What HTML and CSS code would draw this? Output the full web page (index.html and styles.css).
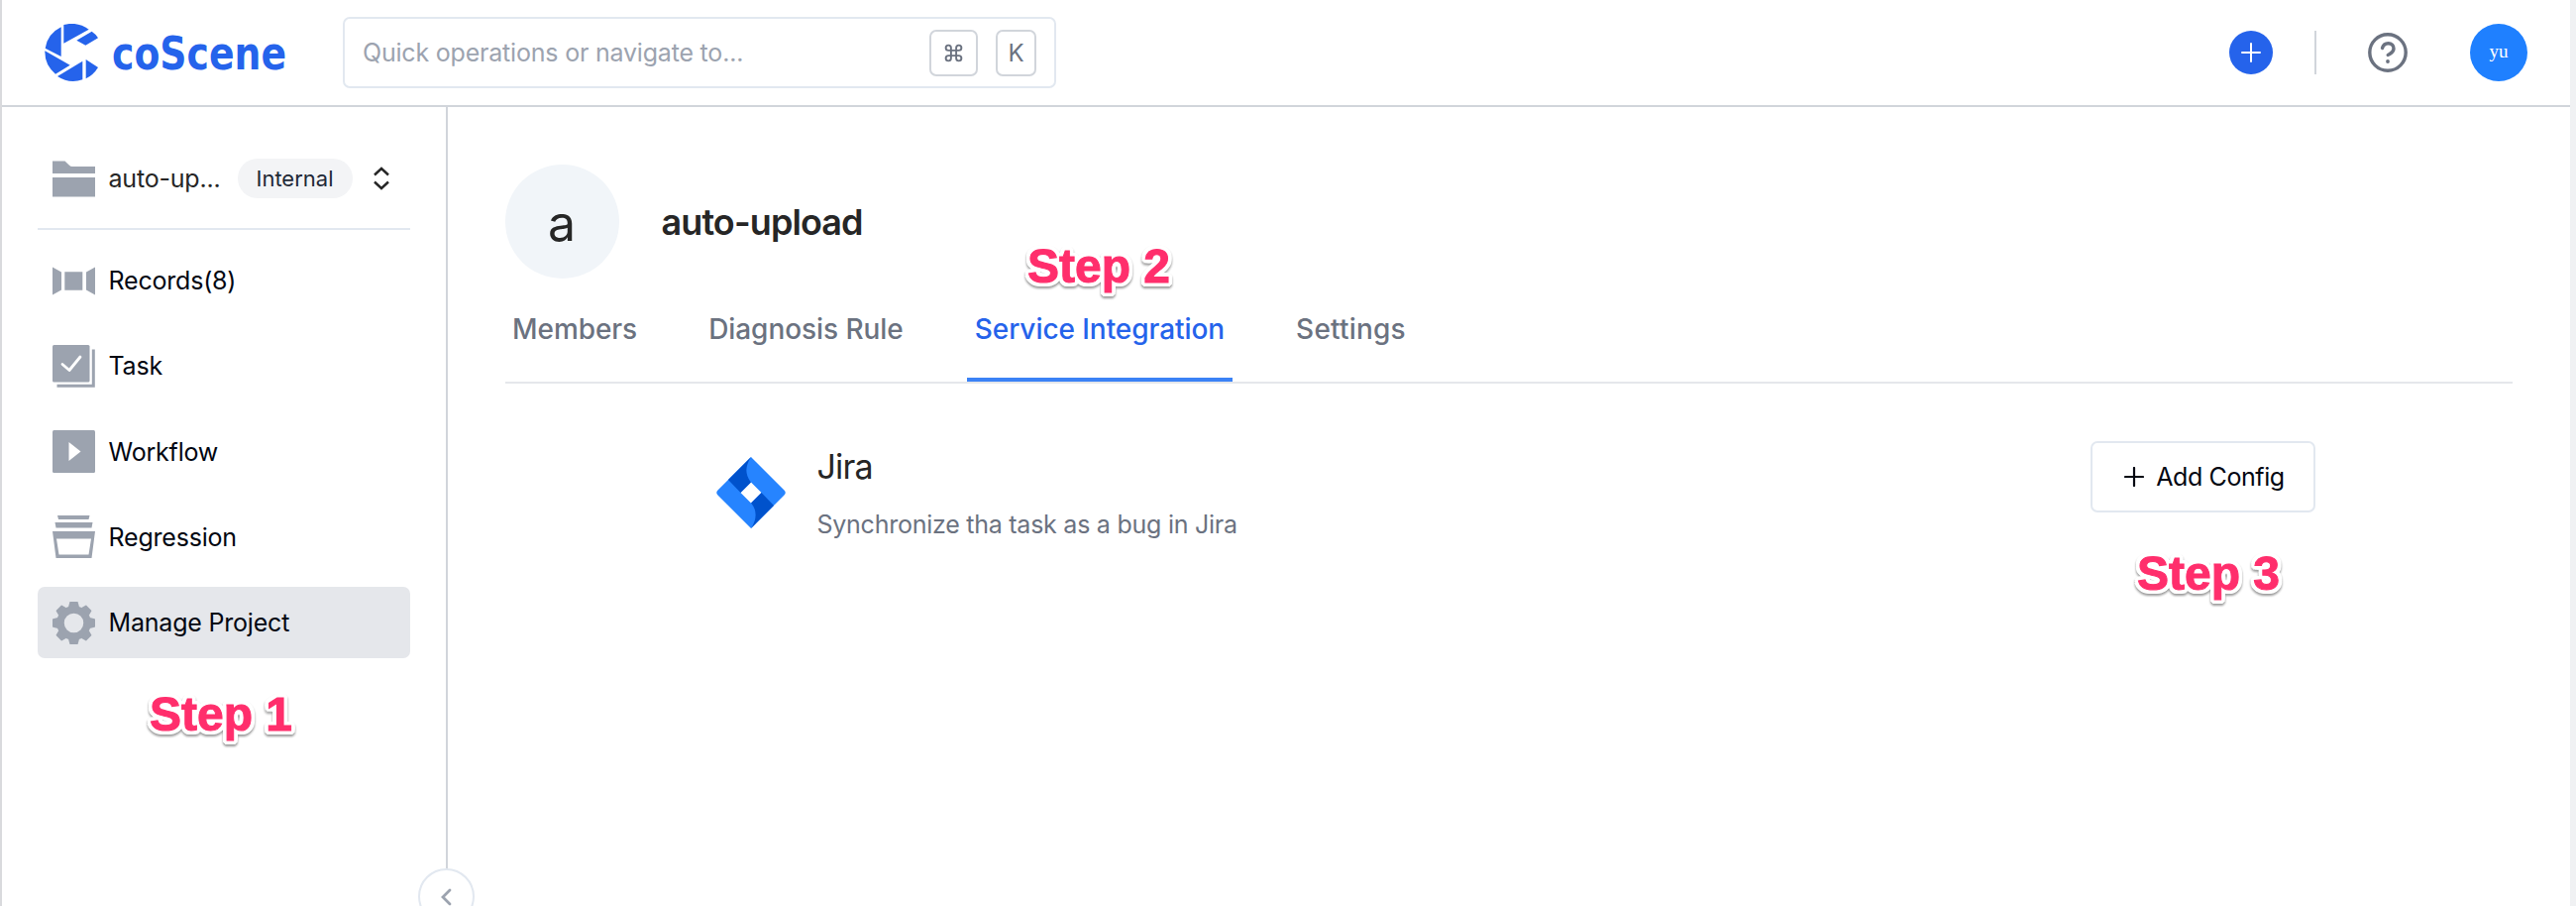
FILE: index.html
```html
<!DOCTYPE html>
<html lang="en">
<head>
<meta charset="utf-8">
<title>coScene</title>
<link rel="stylesheet" href="styles.css">
</head>
<body>
<div class="app">
  <header class="header">
    <div class="brand">
      <svg class="brand-mark" viewBox="135 72 165 174"><g fill="#2563eb"><path d="M185 82A87 87 0 0 0 137 146L185 171Z"/><path d="M193 75A90 90 0 0 1 269 89L193 131Z"/><path d="M278 95Q290 103 297 115L259 137L232 122Z"/><path d="M136 154A87 87 0 0 0 168 224L212 197Z"/><path d="M174 231A88 88 0 0 0 250 241L250 185Z"/><path d="M260 180L297 204Q283 227 260 238Z"/></g></svg>
      <svg class="brand-name" viewBox="0 0 220 58"><text x="-1" y="45.500" textLength="176" lengthAdjust="spacingAndGlyphs">coScene</text></svg>
    </div>
    <div class="search">
      <span class="search-hint">Quick operations or navigate to...</span>
      <kbd class="key key-cmd"><svg width="21" height="21" viewBox="0 0 24 24" fill="none" stroke="#6b7280" stroke-width="2.2"><path d="M15 6v12a3 3 0 1 0 3-3H6a3 3 0 1 0 3 3V6a3 3 0 1 0-3 3h12a3 3 0 1 0-3-3"/></svg></kbd>
      <kbd class="key">K</kbd>
    </div>
    <div class="actions">
      <button class="create"><svg width="20" height="20" viewBox="0 0 20 20" stroke="#fff" stroke-width="2" stroke-linecap="round"><path d="M10 1v18M1 10h18"/></svg></button>
      <span class="divider"></span>
      <svg class="help" width="40" height="40" viewBox="0 0 40 40" fill="none" stroke="#6b7280" stroke-width="3.4" stroke-linecap="round"><circle cx="20" cy="20" r="18.2"/><path d="M14.5 15.5C15.5 11.5 18 10.700 20.500 10.700C24 10.700 26 13 26 16C26 20 22.500 20.800 20.200 22.500"/><circle cx="20" cy="29" r="1.900" fill="#6b7280" stroke="none"/></svg>
      <span class="user">yu</span>
    </div>
  </header>
  <div class="body">
    <aside class="sidebar">
      <div class="project">
        <svg class="icon" viewBox="0 0 43 43" fill="#9ca3af"><path d="M0 3.500H12.500Q15 6 17 7.800Q18 9 20 9H43V16H0ZM0 20H43V39.500H0Z"/></svg>
        <span class="project-name">auto-up...</span>
        <span class="badge">Internal</span>
        <svg class="updown" width="16" height="24" viewBox="0 0 16 24" fill="none" stroke="#262626" stroke-width="2.400"><path d="M1 8.500L8 2L15 8.500M1 15.500L8 22L15 15.500"/></svg>
      </div>
      <nav class="nav">
        <a class="item"><svg class="icon" viewBox="0 0 43 43" fill="#9ca3af"><path d="M0 7.500L9 12.500V30.500L0 35.500ZM12.300 12.300H30.300V30.700H12.300ZM43 7.500L34 12.500V30.500L43 35.500Z"/></svg><span>Records(8)</span></a>
        <a class="item"><svg class="icon" viewBox="0 0 43 43"><rect width="37.500" height="37.500" rx="1.500" fill="#9ca3af"/><path d="M41.300 4.500V41.300H4.500" fill="none" stroke="#9ca3af" stroke-width="3"/><path d="M10 19.500L17 25.500L28 12" fill="none" stroke="#fff" stroke-width="2.800" stroke-linecap="round" stroke-linejoin="round"/></svg><span>Task</span></a>
        <a class="item"><svg class="icon" viewBox="0 0 43 43"><rect width="43" height="43" rx="1.500" fill="#9ca3af"/><path d="M16.500 12V31L28.500 21.500Z" fill="#fff"/></svg><span>Workflow</span></a>
        <a class="item"><svg class="icon" viewBox="0 0 43 43" fill="#9ca3af"><path d="M5 0H37.500L36.500 4H6ZM2.500 7H40.500L39.500 12.500H3.500Z"/><path fill-rule="evenodd" d="M0 16H43L39.500 43H3.500ZM4 23.500L6.500 39.500H36.500L39 23.500Z"/></svg><span>Regression</span></a>
        <a class="item active"><svg class="icon" viewBox="-21.500 -21.500 43 43"><g fill="#9ca3af"><circle r="13.500" fill="none" stroke="#9ca3af" stroke-width="7.500"/><g id="teeth"><path id="tooth" d="M-5.500 -16L-4.200 -21Q-4 -21.500 -3.500 -21.500H3.500Q4 -21.500 4.200 -21L5.500 -16Z"/><use href="#tooth" transform="rotate(45)"/><use href="#tooth" transform="rotate(90)"/><use href="#tooth" transform="rotate(135)"/></g><use href="#teeth" transform="rotate(180)"/></g></svg><span>Manage Project</span></a>
      </nav>
      <button class="collapse"><svg width="12" height="18" viewBox="0 0 12 18" fill="none" stroke="#9ca3af" stroke-width="2.800" stroke-linecap="round"><path d="M10 2L3 9L10 16"/></svg></button>
      <span class="step step-1">Step 1</span>
    </aside>
    <main class="main">
      <div class="heading">
        <span class="letter">a</span>
        <h1 class="title">auto-upload</h1>
      </div>
      <div class="tabs">
        <a class="tab">Members</a>
        <a class="tab">Diagnosis Rule</a>
        <a class="tab selected">Service Integration</a>
        <a class="tab last">Settings</a>
      </div>
      <section class="integration">
        <svg class="jira" width="70" height="72" viewBox="0 0 70 72"><path fill="#2684ff" fill-rule="evenodd" d="M35 0L68.500 33.500Q71 36 68.500 38.500L35 72L1.500 38.500Q-1 36 1.500 33.500ZM35 25.500L24.500 36L35 46.500L45.500 36Z"/><path fill="#0052cc" d="M35 0Q26 14 34.500 25L35 25.500L24.500 36L12 23ZM35 72Q44 58 35.500 47L35 46.500L45.500 36L58 49Z"/></svg>
        <div class="info">
          <h2 class="name">Jira</h2>
          <p class="desc">Synchronize tha task as a bug in Jira</p>
        </div>
        <button class="add"><svg width="20" height="20" viewBox="0 0 20 20" stroke="#030712" stroke-width="2.200" stroke-linecap="round"><path d="M10 1v18M1 10h18"/></svg><span>Add Config</span></button>
      </section>
      <span class="step step-2">Step 2</span>
      <span class="step step-3">Step 3</span>
    </main>
  </div>
</div>
</body>
</html>
```
FILE: styles.css
```css
* { box-sizing: border-box; }
body { margin: 0; background: #f0f1f3; font-family: Inter, "Liberation Sans", sans-serif; color: #030712; }
button { padding: 0; font: inherit; color: inherit; background: none; }
.app { width: 2594px; height: 914px; display: flex; flex-direction: column; background: #fff; border-left: 2px solid #d9dadd; overflow: hidden; }
.header { height: 108px; flex: none; display: flex; align-items: center; padding: 0 43px; border-bottom: 2px solid #d1d5db; }
.brand { display: flex; width: 301px; gap: 14px; }
.brand-mark { width: 55px; height: 58px; flex: none; }
.brand-name { width: 220px; height: 58px; flex: none; overflow: visible; }
.brand-name text { font: bold 46px "DejaVu Sans Condensed", "DejaVu Sans", sans-serif; fill: #2563eb; }
.search { width: 720px; height: 72px; display: flex; align-items: center; border: 2px solid #e2e8f0; border-radius: 7px; padding: 0 18px; }
.search-hint { flex: 1; font-size: 25px; letter-spacing: -0.2px; color: #9ca3af; white-space: nowrap; }
.key { width: 49px; height: 47px; display: flex; align-items: center; justify-content: center; border: 2px solid #d1d5db; border-radius: 7px; font: 24px Inter, sans-serif; color: #6b7280; }
.key + .key { width: 41px; margin-left: 18px; }
.actions { margin-left: auto; display: flex; align-items: center; }
.create { width: 44px; height: 44px; border: 0; border-radius: 50%; background: #2563eb; display: flex; align-items: center; justify-content: center; }
.divider { width: 2px; height: 44px; margin: 0 52px 0 42px; background: #d1d5db; }
.user { width: 58px; height: 58px; margin-left: 63px; border-radius: 50%; background: #1f80ff; color: #fff; font: 19px/56px "Liberation Serif", serif; text-align: center; }
.body { flex: 1; display: flex; min-height: 0; }
.sidebar { position: relative; width: 450px; flex: none; border-right: 2px solid #d1d5db; padding: 0 36px; }
.project { height: 124px; display: flex; align-items: center; padding: 22px 0 0 15px; border-bottom: 2px solid #e2e8f0; }
.icon { width: 43px; height: 43px; flex: none; margin-right: 13.500px; }
.project-name { width: 130px; font-size: 25px; letter-spacing: -0.2px; color: #262626; }
.badge { width: 116px; height: 40px; border-radius: 20px; background: #f3f4f6; color: #1f2937; font-size: 22px; line-height: 40px; text-align: center; }
.updown { margin-left: 21px; }
.nav { display: flex; flex-direction: column; gap: 14.300px; padding-top: 15px; }
.item { height: 72px; display: flex; align-items: center; padding-left: 15px; border-radius: 7px; font-size: 25px; letter-spacing: -0.2px; }
.active { background: #e5e7eb; }
.collapse { position: absolute; left: 419.500px; top: 768px; width: 57px; height: 57px; border: 2px solid #e2e8f0; border-radius: 50%; background: #fff; display: flex; align-items: center; justify-content: center; }
.main { position: relative; flex: 1; padding: 58px 58px 0 57.500px; }
.heading { display: flex; align-items: center; gap: 43px; height: 115px; }
.letter { width: 115px; height: 115px; border-radius: 50%; background: #f1f5f9; color: #262626; font-size: 50px; line-height: 119px; text-align: center; }
.title { margin: 0; font-size: 36px; font-weight: 600; letter-spacing: -0.9px; color: #262626; }
.tabs { display: flex; height: 106px; border-bottom: 2px solid #e5e7eb; }
.tab { height: 104px; padding: 0 7.500px; margin-right: 57px; font-size: 28px; font-weight: 500; letter-spacing: -0.060px; line-height: 102px; color: #6b7280; white-space: nowrap; }
.selected { color: #2563eb; border-bottom: 4px solid #3b82f6; }
.last { letter-spacing: 0.200px; }
.integration { display: flex; margin: 58px 199px 0 213.500px; }
.jira { margin-top: 16px; }
.info { flex: 1; padding: 4px 0 0 31.500px; }
.name { margin: 0; font-size: 34px; font-weight: 400; line-height: 44px; letter-spacing: -0.8px; color: #262626; }
.desc { margin: 20px 0 0; font-size: 25px; line-height: 32px; letter-spacing: -0.250px; color: #6b7280; }
.add { width: 227px; height: 72px; display: flex; align-items: center; justify-content: center; gap: 12px; padding-left: 3px; border: 2px solid #e2e8f0; border-radius: 7px; font-size: 25px; letter-spacing: -0.400px; }
.step {
  position: absolute;
  font: bold 48px/56px "Liberation Sans", sans-serif;
  color: #ff2e6c;
  white-space: nowrap;
  -webkit-text-stroke: 1px #ff2e6c;
  text-shadow: 4px 0 #fff, -4px 0 #fff, 0 4px #fff, 0 -4px #fff, 3px 3px #fff, -3px 3px #fff, 3px -3px #fff, -3px -3px #fff, 4px 2px #fff, -4px 2px #fff, 2px 4px #fff, -2px 4px #fff, 4px -2px #fff, -4px -2px #fff, 2px -4px #fff, -2px -4px #fff;
  filter: drop-shadow(0 2px 1px rgba(0,0,0,.4));
}
.step-1 { left: 149px; top: 585px; }
.step-2 { left: 585px; top: 133px; }
.step-3 { left: 1705px; top: 443px; }
```
